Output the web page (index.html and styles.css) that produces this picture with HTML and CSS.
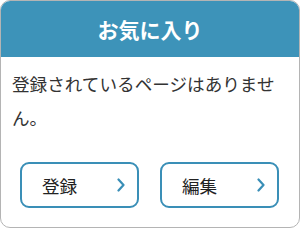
FILE: index.html
```html
<!DOCTYPE html>
<html lang="ja">
<head>
<meta charset="utf-8">
<link rel="stylesheet" href="styles.css">
</head>
<body>
<div class="card">
  <div class="card-header">お気に入り</div>
  <div class="card-body">
    <p class="message">登録されているページはありません。</p>
    <div class="actions">
      <a class="btn" href="#"><span>登録</span><svg class="chev" viewBox="0 0 8 14" width="8" height="14"><path d="M1.5 1.5 L6.5 7 L1.5 12.5" fill="none" stroke="#3a8fb7" stroke-width="2.2" stroke-linecap="round" stroke-linejoin="round"/></svg></a>
      <a class="btn" href="#"><span>編集</span><svg class="chev" viewBox="0 0 8 14" width="8" height="14"><path d="M1.5 1.5 L6.5 7 L1.5 12.5" fill="none" stroke="#3a8fb7" stroke-width="2.2" stroke-linecap="round" stroke-linejoin="round"/></svg></a>
    </div>
  </div>
</div>
</body>
</html>
```

FILE: styles.css
```css
html, body {
  margin: 0;
  padding: 0;
  background: #ffffff;
}
body {
  font-family: "Noto Sans CJK JP", "Noto Sans", sans-serif;
  color: #333333;
}
.card {
  width: 300px;
  height: 228px;
  box-sizing: border-box;
  border: 1px solid #b4b4b4;
  border-radius: 10px;
  overflow: hidden;
  display: flex;
  flex-direction: column;
}
.card-header {
  background: #3d93b9;
  color: #ffffff;
  font-weight: 700;
  font-size: 21px;
  height: 57px;
  margin: -1px -1px 0 -1px;
  display: flex;
  align-items: center;
  justify-content: center;
}
.card-body {
  padding: 10px 11px 0 11px;
}
.message {
  margin: 0;
  font-size: 17.6px;
  line-height: 34px;
  color: #333333;
}
.actions {
  margin-top: 27px;
  display: flex;
  gap: 21px;
  padding-left: 8px;
}
.btn {
  width: 119px;
  height: 46px;
  box-sizing: border-box;
  border: 2px solid #3a8fb7;
  border-radius: 9px;
  display: flex;
  align-items: center;
  justify-content: space-between;
  padding: 0 12px 0 20px;
  text-decoration: none;
  color: #222222;
  font-size: 17.6px;
}
.chev {
  display: block;
}
```
